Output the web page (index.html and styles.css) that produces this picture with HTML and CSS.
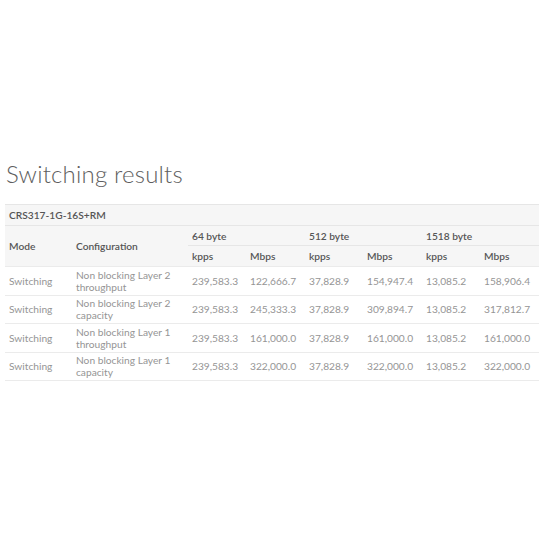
FILE: index.html
```html
<!DOCTYPE html>
<html>
<head>
<meta charset="utf-8">
<link rel="stylesheet" href="styles.css">
</head>
<body>
<div class="page">
  <h2 class="title">Switching results</h2>
  <table class="results">
    <colgroup>
      <col class="c-mode"><col class="c-conf">
      <col class="c-k"><col class="c-m"><col class="c-k"><col class="c-m"><col class="c-k"><col class="c-m">
    </colgroup>
    <thead>
      <tr><th colspan="8" class="model">CRS317-1G-16S+RM</th></tr>
      <tr>
        <th rowspan="2" class="mid">Mode</th>
        <th rowspan="2" class="mid">Configuration</th>
        <th colspan="2" class="grp">64 byte</th>
        <th colspan="2" class="grp">512 byte</th>
        <th colspan="2" class="grp">1518 byte</th>
      </tr>
      <tr class="units">
        <th>kpps</th><th>Mbps</th><th>kpps</th><th>Mbps</th><th>kpps</th><th>Mbps</th>
      </tr>
    </thead>
    <tbody>
      <tr><td>Switching</td><td>Non blocking Layer 2 throughput</td><td>239,583.3</td><td>122,666.7</td><td>37,828.9</td><td>154,947.4</td><td>13,085.2</td><td>158,906.4</td></tr>
      <tr><td>Switching</td><td>Non blocking Layer 2 capacity</td><td>239,583.3</td><td>245,333.3</td><td>37,828.9</td><td>309,894.7</td><td>13,085.2</td><td>317,812.7</td></tr>
      <tr><td>Switching</td><td>Non blocking Layer 1 throughput</td><td>239,583.3</td><td>161,000.0</td><td>37,828.9</td><td>161,000.0</td><td>13,085.2</td><td>161,000.0</td></tr>
      <tr><td>Switching</td><td>Non blocking Layer 1 capacity</td><td>239,583.3</td><td>322,000.0</td><td>37,828.9</td><td>322,000.0</td><td>13,085.2</td><td>322,000.0</td></tr>
    </tbody>
  </table>
</div>
</body>
</html>
```
FILE: styles.css
```css
html, body {
  margin: 0;
  padding: 0;
  background: #ffffff;
}
.page {
  padding: 155px 1px 0 5px;
  font-family: Lato, "Liberation Sans", sans-serif;
}
.title {
  margin: 0 0 11px 1px;
  font-size: 24px;
  font-weight: 300;
  color: #5e5e5e;
  line-height: 38px;
  letter-spacing: 0.2px;
}
.results {
  width: 534px;
  border-collapse: collapse;
  table-layout: fixed;
  font-size: 10.2px;
}
.c-mode { width: 67px; }
.c-conf { width: 116px; }
.c-k { width: 58px; }
.c-m { width: 59px; }
.results th, .results td {
  text-align: left;
  padding: 0 4px;
  vertical-align: middle;
}
.results thead th {
  background: #f6f6f6;
  color: #555555;
  font-weight: 600;
  height: 19.7px;
  line-height: 12px;
  border-top: 1px solid #e6e6e6;
}
.results tbody td {
  color: #959595;
  font-weight: 400;
  height: 27.5px;
  line-height: 12px;
  border-top: 1px solid #ebebeb;
  border-bottom: 1px solid #ebebeb;
}
```
